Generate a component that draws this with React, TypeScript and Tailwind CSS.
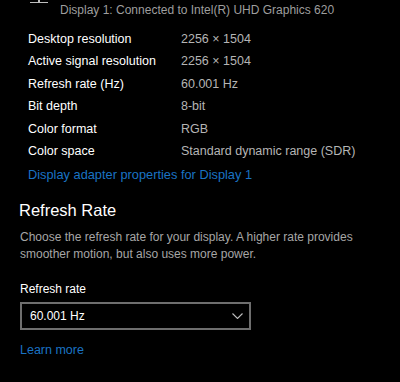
import React from "react";

const rows = [
  ["Desktop resolution", "2256 × 1504"],
  ["Active signal resolution", "2256 × 1504"],
  ["Refresh rate (Hz)", "60.001 Hz"],
  ["Bit depth", "8-bit"],
  ["Color format", "RGB"],
  ["Color space", "Standard dynamic range (SDR)"],
];

const App = () => {
  return (
    <div className="w-[400px] h-[382px] bg-black text-white overflow-hidden font-['Liberation_Sans',Arial,sans-serif] text-[13px]">
      {/* header */}
      <div className="flex h-[21px]">
        <svg width="18" height="4" className="ml-[30px] self-start" viewBox="0 0 18 4">
          <rect x="8" y="0" width="2" height="3" fill="#bdbdbd" />
          <rect x="0" y="2" width="18" height="1" fill="#bdbdbd" />
        </svg>
        <span className="ml-[12px] text-[12px] text-[#9e9e9e] leading-[21px]">
          Display 1: Connected to Intel(R) UHD Graphics 620
        </span>
      </div>

      {/* properties */}
      <div className="pl-[28px] pt-[7px] text-[12.5px]">
        {rows.map(([label, value]) => (
          <div key={label} className="flex h-[22.5px] items-center">
            <span className="w-[153px] text-white">{label}</span>
            <span className="text-[#b5b5b5]">{value}</span>
          </div>
        ))}
        <div className="flex h-[22.5px] items-center text-[12.8px] text-[#1a73c4]">
          Display adapter properties for Display 1
        </div>
      </div>

      {/* refresh rate section */}
      <div className="pl-[20px]">
        <h2 className="text-[16.5px] leading-[26px] mt-[11px] -ml-[1px]">Refresh Rate</h2>
        <p className="w-[366px] text-[12px] text-[#a6a6a6] leading-[17px] mt-[6px]">
          Choose the refresh rate for your display. A higher rate provides smoother motion, but also uses more power.
        </p>
        <div className="mt-[18px] text-[12px] leading-[17px]">Refresh rate</div>
        <div className="mt-[4px] w-[231px] h-[28px] border-2 border-[#6e6e6e] flex items-center justify-between pl-[8px] pr-[6px] text-[12px]">
          <span>60.001 Hz</span>
          <svg width="11" height="6" viewBox="0 0 11 6" fill="none" stroke="#bdbdbd" strokeWidth="1.1">
            <path d="M0.5 0.5l5 5 5-5" />
          </svg>
        </div>
        <div className="mt-[12px] text-[12.5px] text-[#1a73c4] leading-[17px]">Learn more</div>
      </div>
    </div>
  );
};

export default App;
